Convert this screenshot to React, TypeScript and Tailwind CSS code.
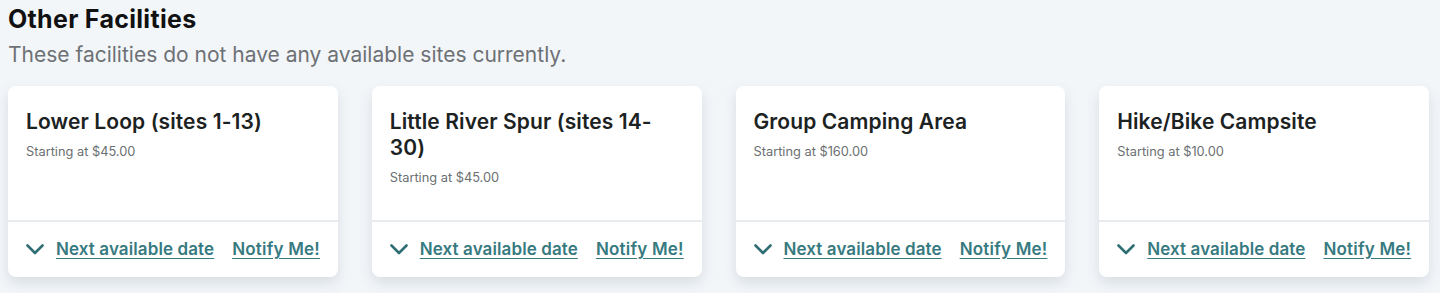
const facilities = [
  { name: 'Lower Loop (sites 1-13)', price: '$45.00' },
  { name: 'Little River Spur (sites 14-30)', price: '$45.00' },
  { name: 'Group Camping Area', price: '$160.00' },
  { name: 'Hike/Bike Campsite', price: '$10.00' },
]

function Chevron() {
  return (
    <svg width="18" height="11" viewBox="0 0 18 11" fill="none" className="shrink-0">
      <polyline
        points="1.5,1.5 9,9 16.5,1.5"
        stroke="#2f6f74"
        strokeWidth="2.6"
        strokeLinecap="round"
        strokeLinejoin="round"
      />
    </svg>
  )
}

export default function App() {
  return (
    <div
      className="min-h-[293px] bg-[#f3f6f9] pl-2 pr-[11px] pt-[4px]"
      style={{ fontFamily: 'Inter, "Noto Sans", sans-serif' }}
    >
      <h2 className="text-[25px] leading-[30px] font-bold text-[#111] tracking-[0.3px]">
        Other Facilities
      </h2>
      <p className="mt-[7px] text-[21px] leading-[28px] text-[#6d7175]">
        These facilities do not have any available sites currently.
      </p>

      <div className="mt-[17px] grid grid-cols-4 gap-[34px]">
        {facilities.map((f) => (
          <div
            key={f.name}
            className="flex flex-col rounded-lg bg-white shadow-[0_6px_14px_rgba(40,60,80,0.13)]"
          >
            <div className="h-[134px] pl-[18px] pr-[24px] pt-[23px]">
              <h3 className="text-[21px] leading-[26px] font-semibold text-[#1c2222] tracking-[0.1px]">
                {f.name}
              </h3>
              <p className="mt-[8px] text-[12.8px] leading-[18px] text-[#6b6f72]">
                Starting at {f.price}
              </p>
            </div>
            <div className="h-[2px] bg-[#e9ecee]" />
            <div className="flex h-[55px] items-center gap-[18px] whitespace-nowrap pl-[18px]">
              <div className="flex shrink-0 items-center gap-[12px]">
                <Chevron />
                <a className="text-[17px] font-semibold text-[#377a7f] underline underline-offset-[3px] tracking-[0.1px]">
                  Next available date
                </a>
              </div>
              <a className="shrink-0 text-[17px] font-semibold text-[#377a7f] underline underline-offset-[3px] tracking-[0.2px]">
                Notify Me!
              </a>
            </div>
          </div>
        ))}
      </div>
    </div>
  )
}
